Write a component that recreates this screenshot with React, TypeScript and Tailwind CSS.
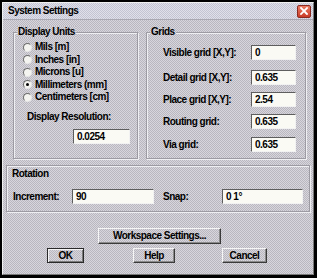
import React from "react";

const dither =
  "bg-[image:repeating-conic-gradient(#d8d6dd_0_25%,#b9b7bf_0_50%)] bg-[length:2px_2px]";

function Field({ value, w }: { value: string; w: string }) {
  return (
    <div
      className={`${w} h-[15px] shrink-0 border border-t-[#5e5e5e] border-l-[#5e5e5e] border-b-[#f2f2f2] border-r-[#f2f2f2] bg-[#fafaf4] pl-[3px] leading-[13px]`}
    >
      {value}
    </div>
  );
}

function Radio({ label, checked }: { label: string; checked?: boolean }) {
  return (
    <div className="flex h-[12.5px] items-center gap-[3px]">
      <span className="flex h-[9px] w-[9px] items-center justify-center rounded-full border border-t-[#6c6c6c] border-l-[#6c6c6c] border-b-[#e6e6e6] border-r-[#e6e6e6] bg-[#f4f4f0]">
        {checked && <span className="h-[3px] w-[3px] rounded-full bg-black" />}
      </span>
      <span className="leading-[12px]">{label}</span>
    </div>
  );
}

function Group({ title, className, children }: { title?: string; className: string; children: React.ReactNode }) {
  return (
    <div
      className={`relative border border-[#9d9ba3] shadow-[inset_1px_1px_0_#efeff2,1px_1px_0_#efeff2] ${className}`}
    >
      {title && (
        <span className={`absolute left-[3px] top-[-7px] px-[1px] leading-[12px] ${dither}`}>{title}</span>
      )}
      {children}
    </div>
  );
}

function Btn({ label, w, def }: { label: string; w: string; def?: boolean }) {
  return (
    <div
      className={`${w} flex h-[15px] shrink-0 items-center justify-center leading-[12px] ${
        def
          ? "border border-[#2a2a2a] shadow-[inset_1px_1px_0_#f4f4f4,inset_-1px_-1px_0_#7a7a7a]"
          : "border border-t-[#f6f6f6] border-l-[#f6f6f6] border-b-[#3a3a3a] border-r-[#3a3a3a] shadow-[inset_-1px_-1px_0_#8a8a8a]"
      }`}
    >
      {label}
    </div>
  );
}

export default function App() {
  return (
    <div
      className={`h-[278px] w-[317px] overflow-hidden whitespace-nowrap border-l-2 border-t-2 border-r-[3px] border-b-[3px] border-black font-['Liberation_Sans',Arial,sans-serif] text-[10px] font-bold tracking-[-0.5px] text-black ${dither}`}
    >
      <div className="flex h-full flex-col border-l border-t border-l-[#f0f0f0] border-t-[#f0f0f0] border-r border-b border-r-[#7a7a7a] border-b-[#7a7a7a]">
        {/* title bar */}
        <div className="flex h-[17px] shrink-0 items-center justify-between border-b border-[#a9a8b2] bg-[image:repeating-conic-gradient(#e0e0ea_0_25%,#c3c4d2_0_50%)] bg-[length:2px_2px] pl-[5px] pr-[2px]">
          <span className="leading-[12px]">System Settings</span>
          <div className="flex h-[13px] w-[14px] items-center justify-center rounded-[2px] border border-[#8a2a20] bg-gradient-to-b from-[#ec7a62] to-[#c83a28]">
            <svg width="8" height="8" viewBox="0 0 8 8">
              <path d="M1 1 L7 7 M7 1 L1 7" stroke="#fff" strokeWidth="1.8" strokeLinecap="square" />
            </svg>
          </div>
        </div>

        {/* top groups */}
        <div className="ml-[10px] mt-[12px] flex gap-[8px]">
          <Group title="Display Units" className="h-[127px] w-[125px] shrink-0">
            <div className="flex flex-col pl-[9px] pt-[8px]">
              <Radio label="Mils [m]" />
              <Radio label="Inches [in]" />
              <Radio label="Microns [u]" />
              <Radio label="Millimeters (mm]" checked />
              <Radio label="Centimeters [cm]" />
            </div>
            <div className="ml-[13px] mt-[7.5px] leading-[12px]">Display Resolution:</div>
            <div className="ml-[59px] mt-[6px]">
              <Field value="0.0254" w="w-[57px]" />
            </div>
          </Group>

          <Group title="Grids" className="h-[127px] w-[160px] shrink-0">
            <div className="flex flex-col pl-[16px]">
              <div className="mt-[12px] flex items-center">
                <span className="w-[88px] shrink-0">Visible grid [X,Y]:</span>
                <Field value="0" w="w-[45px]" />
              </div>
              <div className="mt-[10px] flex items-center">
                <span className="w-[88px] shrink-0">Detail grid [X,Y]:</span>
                <Field value="0.635" w="w-[45px]" />
              </div>
              <div className="mt-[7px] flex items-center">
                <span className="w-[88px] shrink-0">Place grid [X,Y]:</span>
                <Field value="2.54" w="w-[45px]" />
              </div>
              <div className="mt-[7px] flex items-center">
                <span className="w-[88px] shrink-0">Routing grid:</span>
                <Field value="0.635" w="w-[45px]" />
              </div>
              <div className="mt-[8px] flex items-center">
                <span className="w-[88px] shrink-0">Via grid:</span>
                <Field value="0.635" w="w-[45px]" />
              </div>
            </div>
          </Group>
        </div>

        {/* rotation */}
        <Group className="ml-[3px] mt-[6px] h-[47px] w-[304px] shrink-0">
          <div className="ml-[5px] mt-[2px] leading-[12px]">Rotation</div>
          <div className="mt-[9px] flex items-center pl-[6px]">
            <span className="w-[59px] shrink-0">Increment:</span>
            <Field value="90" w="w-[82px]" />
            <span className="ml-[9px] w-[59px] shrink-0">Snap:</span>
            <Field value="0 1°" w="w-[81px]" />
          </div>
        </Group>

        <div className="ml-[95px] mt-[16px]">
          <div className="flex h-[16px] w-[123px] items-center justify-center border border-t-[#f6f6f6] border-l-[#f6f6f6] border-b-[#3a3a3a] border-r-[#3a3a3a] shadow-[inset_-1px_-1px_0_#8a8a8a] leading-[12px]">
            Workspace Settings...
          </div>
        </div>

        <div className="ml-[44px] mt-[4px] flex">
          <Btn label="OK" w="w-[37px]" def />
          <div className="ml-[49px]">
            <Btn label="Help" w="w-[42px]" />
          </div>
          <div className="ml-[47px]">
            <Btn label="Cancel" w="w-[45px]" />
          </div>
        </div>
      </div>
    </div>
  );
}
